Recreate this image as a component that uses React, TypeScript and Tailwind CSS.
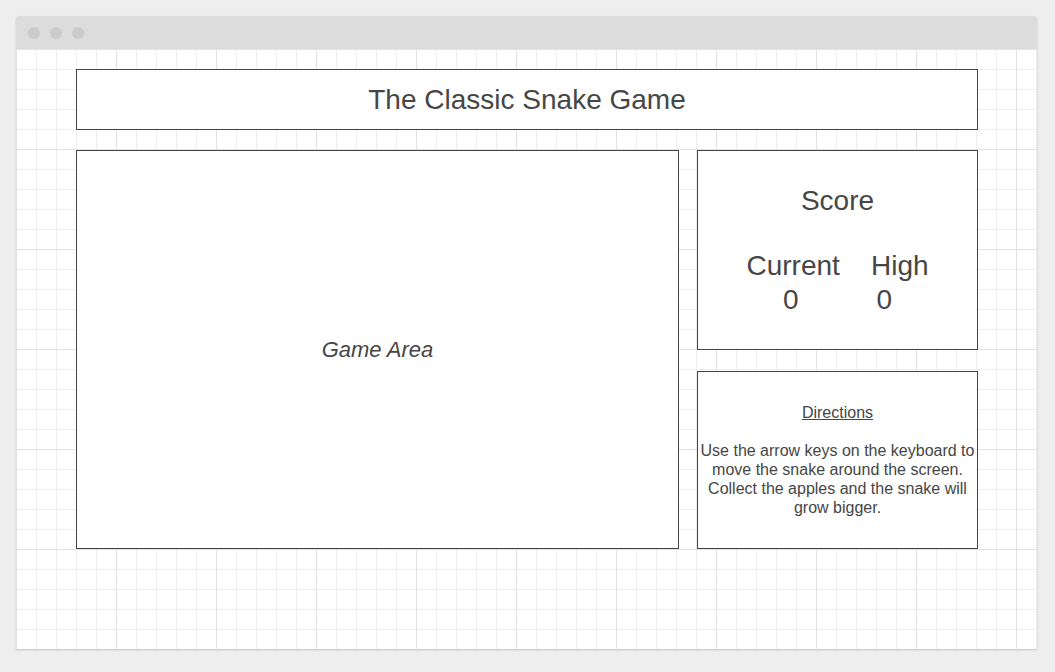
export default function App() {
  return (
    <div className="w-[1055px] h-[672px] bg-[#eeeeee] pt-[16px] pl-[16px] font-['Liberation_Sans',Arial,sans-serif] text-[#464646]">
      <div className="w-[1021px] h-[633px] flex flex-col rounded-t-[4px] overflow-hidden shadow-[0_1px_2px_rgba(0,0,0,0.18)]">
        <div className="h-[33px] shrink-0 bg-[#dcdcdc] flex items-center pl-[12px] gap-[10px]">
          <span className="w-[12px] h-[12px] rounded-full bg-[#cbcbcb]" />
          <span className="w-[12px] h-[12px] rounded-full bg-[#cbcbcb]" />
          <span className="w-[12px] h-[12px] rounded-full bg-[#cbcbcb]" />
        </div>
        <div className="flex-1 bg-white bg-[image:linear-gradient(to_right,#e2e2e2_1px,transparent_1px),linear-gradient(to_bottom,#e2e2e2_1px,transparent_1px),linear-gradient(to_right,#eeeeee_1px,transparent_1px),linear-gradient(to_bottom,#eeeeee_1px,transparent_1px)] bg-[size:100px_100px,100px_100px,20px_20px,20px_20px] pl-[60px] pt-[20px]">
          <div className="w-[902px] h-[61px] border border-[#444444] bg-white flex items-center justify-center text-[28px] leading-none">
            The Classic Snake Game
          </div>
          <div className="flex mt-[20px] gap-[18px]">
            <div className="w-[603px] h-[399px] border border-[#444444] bg-white flex items-center justify-center italic text-[22px]">
              Game Area
            </div>
            <div className="flex flex-col gap-[21px]">
              <div className="w-[281px] h-[200px] border border-[#444444] bg-white flex flex-col items-center justify-center text-[28px] leading-[1.2]">
                <div>Score</div>
                <div className="mt-[32px] whitespace-pre">{"Current    High"}</div>
                <div className="whitespace-pre">{"0          0"}</div>
              </div>
              <div className="w-[281px] h-[178px] border border-[#444444] bg-white flex flex-col items-center justify-center text-[16px] leading-[1.2] text-center">
                <div className="underline">Directions</div>
                <div className="mt-[19px] whitespace-nowrap">
                  Use the arrow keys on the keyboard to
                  <br />
                  move the snake around the screen.
                  <br />
                  Collect the apples and the snake will
                  <br />
                  grow bigger.
                </div>
              </div>
            </div>
          </div>
        </div>
      </div>
    </div>
  );
}
